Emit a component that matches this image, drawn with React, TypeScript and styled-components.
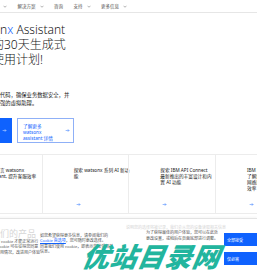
import styled, { createGlobalStyle } from "styled-components";

const GlobalStyle = createGlobalStyle`
  html, body {
    margin: 0;
    padding: 0;
    background: #ffffff;
  }
  body {
    width: 257px;
    height: 274px;
    overflow: hidden;
    font-family: "Noto Sans", "Noto Sans CJK SC", sans-serif;
    color: #161616;
  }
`;

const Page = styled.div`
  position: relative;
  width: 302px;
  height: 274px;
  margin-left: -45px;
  overflow: hidden;
`;

const TopNav = styled.nav`
  display: flex;
  align-items: center;
  gap: 10.5px;
  height: 12px;
  padding-left: 35px;
  border-bottom: 1px solid #e6e6e6;
`;

const NavItem = styled.span`
  display: inline-flex;
  align-items: center;
  gap: 4px;
  font-size: 4.5px;
  color: #525252;
  white-space: nowrap;
`;

const Hero = styled.section`
  padding-left: 13px;
`;

const Title = styled.h1`
  margin: 9px 0 0;
  font-size: 12px;
  line-height: 15px;
  font-weight: 300;
  white-space: nowrap;
`;

const Accent = styled.span`
  color: #0f62fe;
`;

const Lead = styled.p`
  margin: 24px 0 0;
  font-size: 5.33px;
  line-height: 8px;
  white-space: nowrap;
`;

const Actions = styled.div`
  display: flex;
  gap: 5px;
  margin-top: 11px;
`;

const PrimaryButton = styled.a`
  display: flex;
  align-items: center;
  justify-content: flex-end;
  box-sizing: border-box;
  width: 44px;
  height: 25px;
  padding-right: 5px;
  background: #0f62fe;
  color: #ffffff;
  font-size: 4.67px;
`;

const TertiaryButton = styled.a`
  display: flex;
  justify-content: space-between;
  box-sizing: border-box;
  width: 57px;
  height: 25px;
  padding: 3.5px 3px 0 5px;
  border: 1px solid #8fb0f7;
  color: #0f62fe;
  font-size: 4.67px;
  line-height: 6px;

  svg {
    align-self: center;
    margin-top: -3px;
  }
`;

const CardRow = styled.section`
  display: grid;
  grid-template-columns: repeat(4, 86.67px);
  height: 58px;
  margin-top: 11px;
  border-top: 1px solid #ececec;
  border-bottom: 1px solid #ececec;
`;

const Card = styled.a<{ $divider?: boolean }>`
  display: flex;
  flex-direction: column;
  padding: 12px 5px 6px 31px;
  border-left: ${(p) => (p.$divider ? "1px solid #ececec" : "none")};
  font-size: 4.67px;
  line-height: 6px;
  color: #161616;
  white-space: nowrap;

  svg {
    margin-top: auto;
    margin-left: 2px;
  }
`;

const CookieBanner = styled.section`
  display: flex;
  height: 57px;
  margin-top: 4px;
  border-top: 1px solid #e4e4e4;
  box-shadow: 0 -1px 2px rgba(0, 0, 0, 0.04);
`;

const CookieIntro = styled.div`
  width: 85px;
  padding: 9px 0 0 13px;
  box-sizing: border-box;
`;

const FadedHeading = styled.div`
  margin-left: 5px;
  font-size: 9px;
  line-height: 11px;
  color: #d6d6d6;
  white-space: nowrap;
`;

const SmallText = styled.p<{ $faded?: boolean; $indent?: number }>`
  margin: 0;
  padding-left: ${(p) => p.$indent ?? 0}px;
  font-size: 4px;
  line-height: 5.3px;
  color: ${(p) => (p.$faded ? "#d4d4d4" : "#525252")};
  white-space: nowrap;
`;

const CookieColumn = styled.div<{ $width: number; $top: number }>`
  width: ${(p) => p.$width}px;
  padding-top: ${(p) => p.$top}px;
  box-sizing: border-box;
`;

const CookieLink = styled.span`
  color: #0f62fe;
  text-decoration: underline;
`;

const CookieButtons = styled.div`
  display: flex;
  flex-direction: column;
  gap: 6px;
  padding-top: 14px;
`;

const CookieButton = styled.a`
  display: flex;
  align-items: center;
  width: 30px;
  height: 13px;
  padding-left: 3px;
  background: #0f62fe;
  color: #ffffff;
  font-size: 4px;
`;

const Watermark = styled.div`
  position: absolute;
  left: 128px;
  top: 240px;
  font-family: "Noto Sans CJK SC", sans-serif;
  font-size: 27px;
  line-height: 32px;
  font-weight: 900;
  font-style: italic;
  letter-spacing: 0.5px;
  color: #22b59e;
  transform: skewX(-10deg);
  white-space: nowrap;
`;

function Chevron() {
  return (
    <svg width="4" height="3" viewBox="0 0 8 5" fill="none">
      <path d="M1 1l3 3 3-3" stroke="#525252" strokeWidth="0.9" />
    </svg>
  );
}

function Arrow({ color, size = 5 }: { color: string; size?: number }) {
  return (
    <svg width={size} height={size} viewBox="0 0 16 16" fill="none">
      <path d="M2 8h11M9 4l4 4-4 4" stroke={color} strokeWidth="1.4" />
    </svg>
  );
}

const navItems = [
  { label: "产品", menu: true },
  { label: "解决方案", menu: true },
  { label: "咨询", menu: false },
  { label: "支持", menu: true },
  { label: "更多信息", menu: true },
];

const cards = [
  ["自然语言 watsonx", "Assistant, 提升客服效率"],
  ["探索 watsonx 系列 AI 新功", "能"],
  ["探索 IBM API Connect", "最新推出的丰富设计和内", "置 AI 功能"],
  ["IBM Instana 可观测性", "了解如何通过自动化", "网络监控提升应用", "效率"],
];

export default function App() {
  return (
    <>
      <GlobalStyle />
      <Page>
        <TopNav>
          {navItems.map((item) => (
            <NavItem key={item.label}>
              {item.label}
              {item.menu && <Chevron />}
            </NavItem>
          ))}
        </TopNav>

        <Hero>
          <Title>
            watson<Accent>x</Accent> Assistant
            <br />
            提供的30天生成式
            <br />
            免费使用计划!
          </Title>
          <Lead>
            无需编写任何代码，确保业务数据安全，并
            <br />
            构建功能更加强的虚拟助理。
          </Lead>
          <Actions>
            <PrimaryButton>
              <Arrow color="#ffffff" />
            </PrimaryButton>
            <TertiaryButton>
              <span>
                了解更多
                <br />
                watsonx
                <br />
                assistant 详情
              </span>
              <Arrow color="#0f62fe" />
            </TertiaryButton>
          </Actions>
        </Hero>

        <CardRow>
          {cards.map((lines, i) => (
            <Card key={i} $divider={i > 0}>
              {lines.map((line) => (
                <span key={line}>{line}</span>
              ))}
              <Arrow color="#0f62fe" />
            </Card>
          ))}
        </CardRow>

        <CookieBanner>
          <CookieIntro>
            <FadedHeading>关于我们的产品</FadedHeading>
            <SmallText>部分网站需要使用 cookie 才能正常运行</SmallText>
            <SmallText>（必需）。其他 cookie 可在征得您同意</SmallText>
            <SmallText>后用于分析网站使用情况，改进用户体验</SmallText>
          </CookieIntro>
          <CookieColumn $width={100} $top={14}>
            <SmallText>如您希望获得更多信息，请参阅我们的</SmallText>
            <SmallText>
              <CookieLink>Cookie 首选项</CookieLink>，您可随时更改选择。
            </SmallText>
            <SmallText>同意我们使用 cookie，即表示您接受相关</SmallText>
            <SmallText>信息。</SmallText>
          </CookieColumn>
          <CookieColumn $width={98} $top={6}>
            <SmallText $faded>说明您的选择将被记录，我们会从您的设备读取相关信息</SmallText>
            <SmallText $indent={20}>为了获得最佳的用户体验，您可以在此处</SmallText>
            <SmallText $indent={20}>更改设置，或稍后在页面底部进行调整。</SmallText>
          </CookieColumn>
          <CookieButtons>
            <CookieButton>全部接受</CookieButton>
            <CookieButton>仅必需</CookieButton>
          </CookieButtons>
        </CookieBanner>

        <Watermark>优站目录网</Watermark>
      </Page>
    </>
  );
}
